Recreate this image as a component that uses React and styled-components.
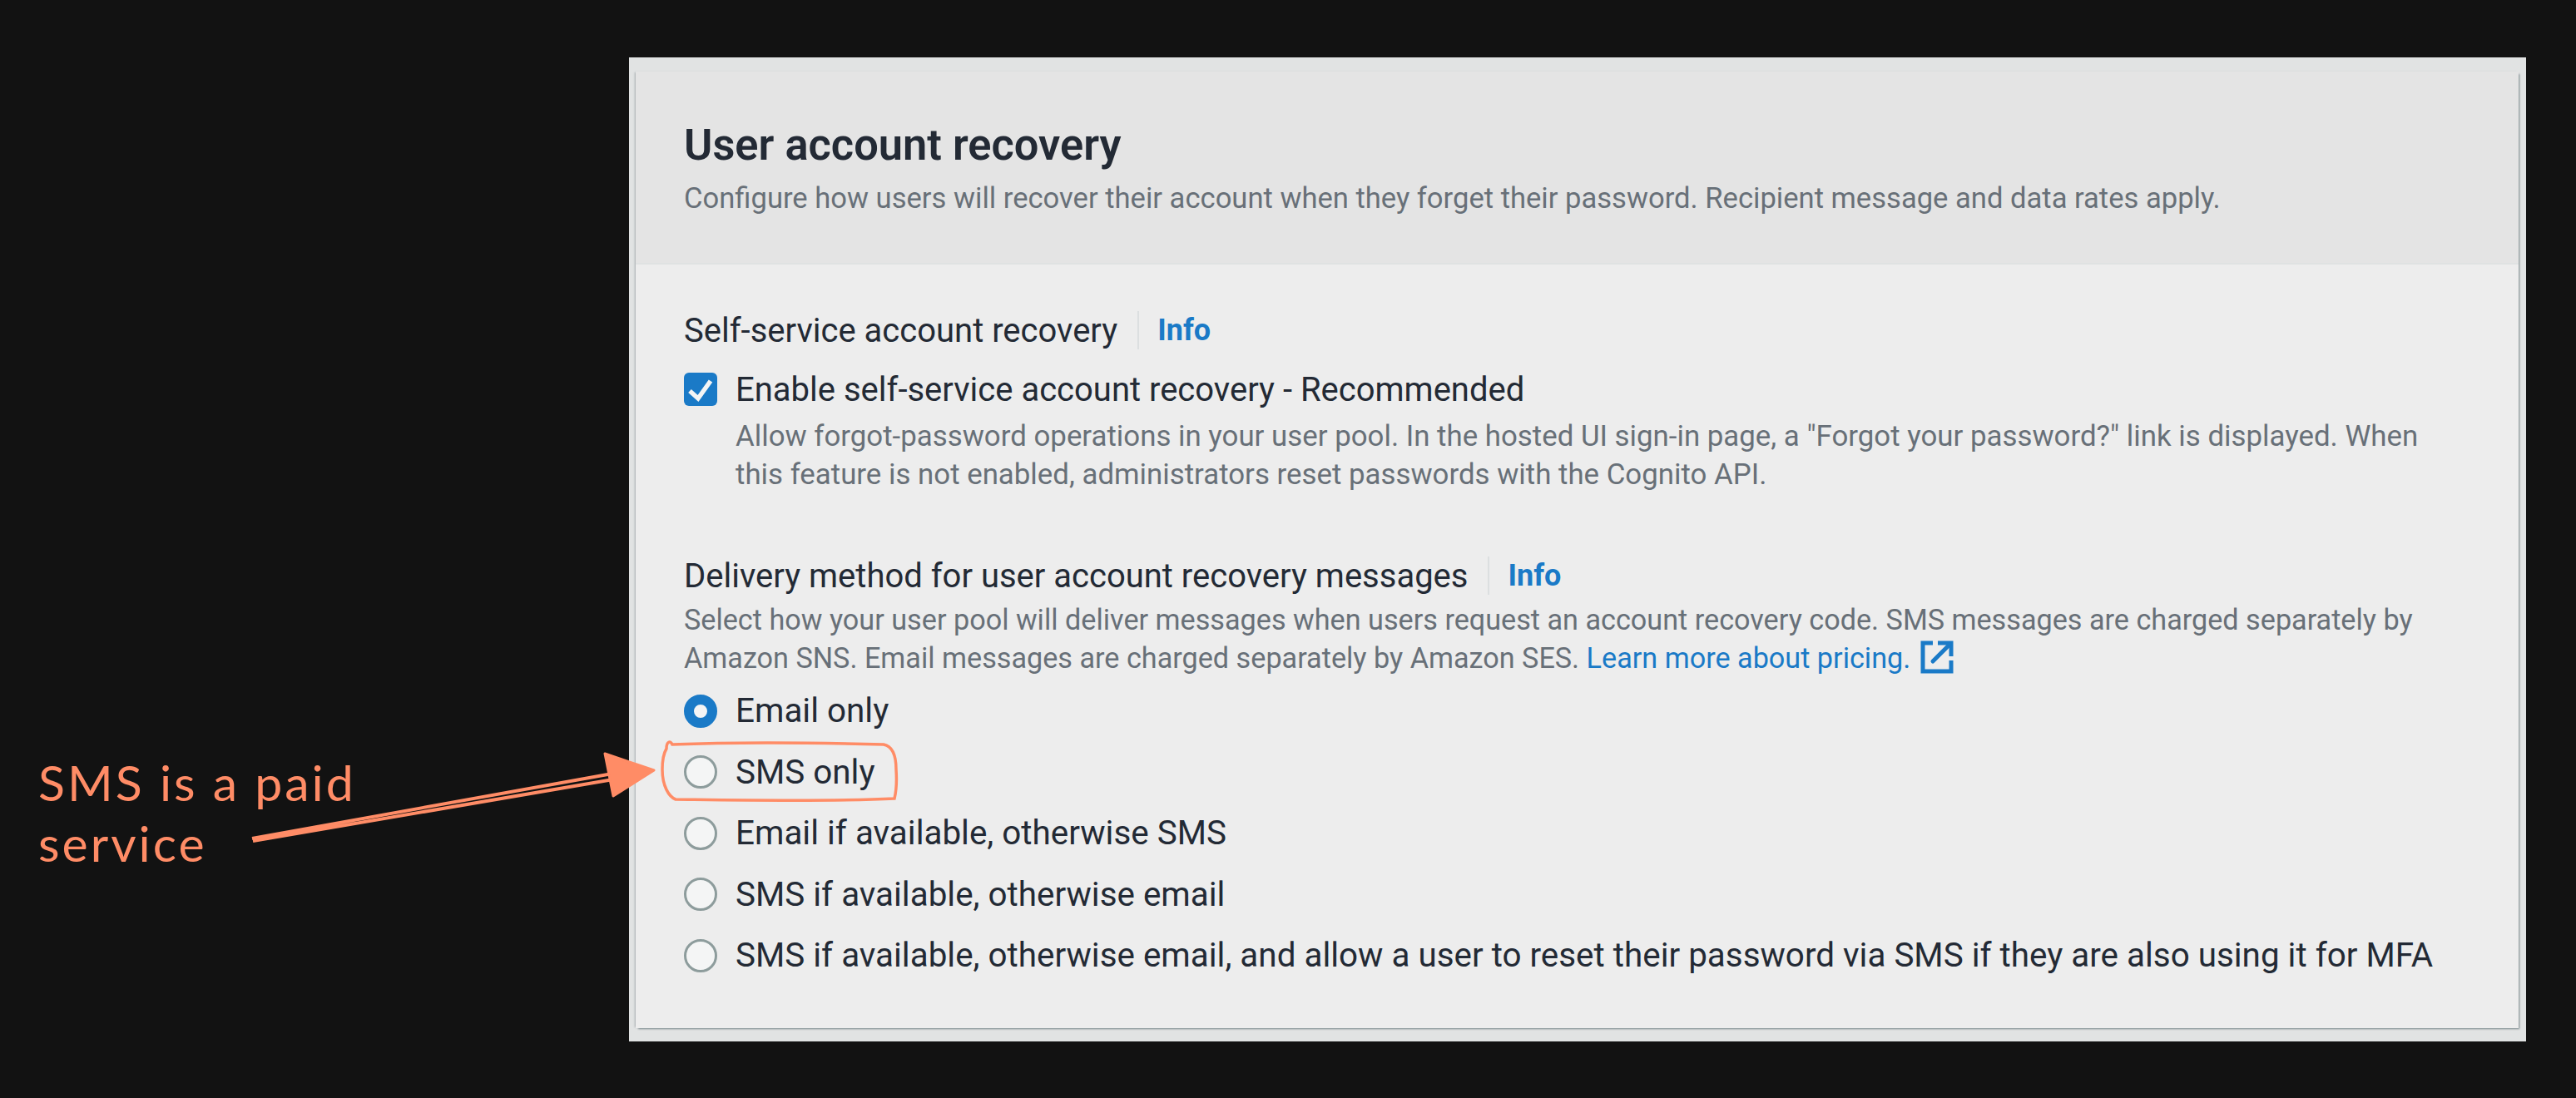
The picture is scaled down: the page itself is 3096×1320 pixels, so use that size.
import React from 'react';
import styled, { createGlobalStyle } from 'styled-components';

const GlobalStyle = createGlobalStyle`
  html, body {
    margin: 0;
    padding: 0;
    background: #121212;
  }
`;

const Page = styled.div`
  position: relative;
  box-sizing: border-box;
  width: 3096px;
  height: 1320px;
  padding: 69px 60px 68px 756px;
  background: #121212;
  font-family: Roboto, "Noto Sans", sans-serif;
  overflow: hidden;
`;

const Shot = styled.div`
  box-sizing: border-box;
  height: 1183px;
  padding: 17px 9px 16px 8px;
  background: #e1e3e3;
`;

const Card = styled.section`
  height: 100%;
  background: #ededed;
  box-shadow: -2px 0 2px -1px rgba(120, 130, 135, 0.55), 2px 2px 2px -1px rgba(110, 125, 130, 0.9);
`;

const CardHeader = styled.header`
  box-sizing: border-box;
  height: 232px;
  padding: 58px 58px 0;
  background: #e4e4e4;
  border-bottom: 2px solid #dfe2e2;
`;

const Title = styled.h2`
  margin: 0;
  font-size: 52.4px;
  line-height: 60px;
  font-weight: 600;
  color: #232a35;
`;

const HeaderText = styled.p`
  margin: 11px 0 0;
  font-size: 34.6px;
  line-height: 46px;
  color: #687078;
`;

const CardBody = styled.div`
  padding: 56px 58px 0;
`;

const Group = styled.div`
  margin-bottom: ${(p) => p.$gap || 0}px;
`;

const LabelRow = styled.div`
  display: flex;
  align-items: center;
  height: 46px;
  font-size: 40px;
  color: #232a35;
`;

const InfoLink = styled.a`
  margin-left: 24px;
  padding-left: 22px;
  border-left: 2px solid #dcdfe0;
  font-size: 36px;
  font-weight: 700;
  line-height: 46px;
  color: #1a7ac7;
`;

const Hint = styled.p`
  margin: ${(p) => p.$top}px 0 0;
  font-size: ${(p) => p.$size}px;
  line-height: 45.5px;
  color: #687078;
`;

const TextLink = styled.a`
  color: #1a7ac7;
`;

const ExternalIcon = styled.svg`
  width: 40px;
  height: 40px;
  margin-left: 12px;
  vertical-align: -7px;
`;

const CheckRow = styled.label`
  display: flex;
  align-items: center;
  gap: 22px;
  height: 46px;
  margin-top: 25px;
  font-size: 40px;
  color: #232a35;
`;

const CheckBox = styled.span`
  display: block;
  flex: none;
  width: 40px;
  height: 40px;
  border-radius: 6px;
  background: #1a7ac7;
`;

const Indented = styled.div`
  margin-left: 62px;
`;

const RadioList = styled.div`
  display: flex;
  flex-direction: column;
  margin-top: 4px;
`;

const RadioRow = styled.label`
  display: flex;
  align-items: center;
  gap: 22px;
  height: 73.5px;
  font-size: 40.4px;
  color: #232a35;
`;

const RadioDot = styled.span`
  box-sizing: border-box;
  flex: none;
  width: 40px;
  height: 40px;
  border-radius: 50%;
  background: #f4f5f5;
  border: ${(p) => (p.$on ? '12px solid #1a7ac7' : '3px solid #8d9c9c')};
`;

const Scribble = styled.svg`
  position: absolute;
  top: 0;
  left: 0;
  pointer-events: none;
`;

const Note = styled.div`
  position: absolute;
  top: 904px;
  left: 46px;
  font-family: Lato, sans-serif;
  font-size: 59px;
  line-height: 73px;
  letter-spacing: 3px;
  color: #ff8c66;
`;

const radios = [
  'Email only',
  'SMS only',
  'Email if available, otherwise SMS',
  'SMS if available, otherwise email',
  'SMS if available, otherwise email, and allow a user to reset their password via SMS if they are also using it for MFA',
];

const App = () => {
  return (
    <Page>
      <GlobalStyle />
      <Shot>
        <Card>
          <CardHeader>
            <Title>User account recovery</Title>
            <HeaderText>
              Configure how users will recover their account when they forget their password. Recipient message and data rates apply.
            </HeaderText>
          </CardHeader>
          <CardBody>
            <Group $gap={76}>
              <LabelRow>
                Self-service account recovery
                <InfoLink>Info</InfoLink>
              </LabelRow>
              <CheckRow>
                <CheckBox>
                  <svg width="40" height="40" viewBox="0 0 40 40" fill="none">
                    <path d="M7 22 L17 31 L32 10" stroke="#f4f5f5" strokeWidth="5.5" />
                  </svg>
                </CheckBox>
                Enable self-service account recovery - Recommended
              </CheckRow>
              <Indented>
                <Hint $top={11} $size={34.85}>
                  Allow forgot-password operations in your user pool. In the hosted UI sign-in page, a "Forgot your password?" link is displayed. When
                  <br />
                  this feature is not enabled, administrators reset passwords with the Cognito API.
                </Hint>
              </Indented>
            </Group>
            <Group>
              <LabelRow>
                Delivery method for user account recovery messages
                <InfoLink>Info</InfoLink>
              </LabelRow>
              <Hint $top={8} $size={34.2}>
                Select how your user pool will deliver messages when users request an account recovery code. SMS messages are charged separately by
                <br />
                Amazon SNS. Email messages are charged separately by Amazon SES.{' '}
                <TextLink>
                  Learn more about pricing.
                  <ExternalIcon viewBox="0 0 40 40" fill="none" stroke="#1a7ac7" strokeWidth="5">
                    <path d="M15 3 H3 V37 H37 V24" />
                    <path d="M15 25 L35 5" strokeLinecap="round" />
                    <path d="M21 3 H37 V19" />
                  </ExternalIcon>
                </TextLink>
              </Hint>
              <RadioList>
                {radios.map((label, i) => (
                  <RadioRow key={label}>
                    <RadioDot $on={i === 0} />
                    {label}
                  </RadioRow>
                ))}
              </RadioList>
            </Group>
          </CardBody>
        </Card>
      </Shot>

      <Note>
        SMS is a paid
        <br />
        service
      </Note>
      <Scribble width="3096" height="1320" viewBox="0 0 3096 1320" fill="none" stroke="#ff8c66">
        <path d="M303 1008 L736 930 M304 1011 L737 937" strokeWidth="4" />
        <path d="M727 906 L786 926 L737 957 Z" fill="#ff8c66" strokeWidth="3" strokeLinejoin="round" />
        <path d="M801 900 C801 891 806 890 808 895 C880 892 990 893 1062 895 C1072 897 1077 908 1077 925 C1078 940 1077 952 1075 960 C1000 964 890 962 812 961 C804 958 796 945 796 925 C796 915 798 905 801 900 Z" strokeWidth="3.5" />
      </Scribble>
    </Page>
  );
};

export default App;
